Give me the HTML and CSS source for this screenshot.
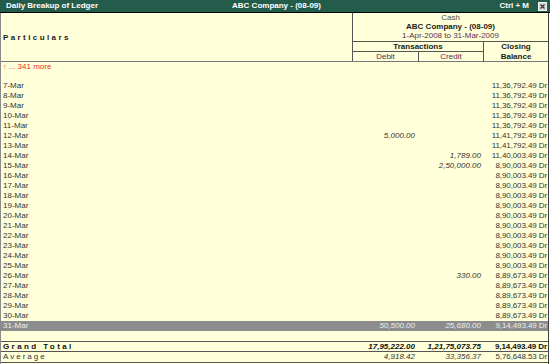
FILE: index.html
```html
<!DOCTYPE html>
<html lang="en">
<head>
    <meta charset="UTF-8">
    <title>Daily Breakup of Ledger</title>
    <link rel="stylesheet" href="styles.css">
</head>
<body>
    <div class="window">
        <!-- Barre de titre -->
        <div class="titlebar">
            <span class="t-left">Daily Breakup of Ledger</span>
            <span class="t-center">ABC Company - (08-09)</span>
            <span class="t-right">Ctrl + M
                <svg class="close" width="9" height="9" viewBox="0 0 9 9">
                    <rect x="0.5" y="0.5" width="8" height="8" fill="#d8d8d0" stroke="#f0f0f0"/>
                    <path d="M2.5 2.5 L6.5 6.5 M6.5 2.5 L2.5 6.5" stroke="#333" stroke-width="1.2"/>
                </svg>
            </span>
        </div>

        <div class="report">
            <!-- En-tête -->
            <div class="head">
                <div class="h-part">Particulars</div>
                <div class="h-info">
                    <div class="company">
                        <div class="c-ledger">Cash</div>
                        <div class="c-name">ABC Company - (08-09)</div>
                        <div class="c-period">1-Apr-2008 to 31-Mar-2009</div>
                    </div>
                    <div class="h-cols">
                        <div class="trans">
                            <div class="trans-title">Transactions</div>
                            <div class="dc">
                                <div class="h-debit">Debit</div>
                                <div class="h-credit">Credit</div>
                            </div>
                        </div>
                        <div class="h-closing">Closing<br>Balance</div>
                    </div>
                </div>
            </div>

            <div class="more"><span class="arrow">&uarr;</span> ... 341 more</div>
            <div class="gap"></div>

            <!-- Lignes du registre -->
            <div class="rows">
                <div class="row"><span class="part">7-Mar</span><span class="dr"></span><span class="cr"></span><span class="bal">11,36,792.49 Dr</span></div>
                <div class="row"><span class="part">8-Mar</span><span class="dr"></span><span class="cr"></span><span class="bal">11,36,792.49 Dr</span></div>
                <div class="row"><span class="part">9-Mar</span><span class="dr"></span><span class="cr"></span><span class="bal">11,36,792.49 Dr</span></div>
                <div class="row"><span class="part">10-Mar</span><span class="dr"></span><span class="cr"></span><span class="bal">11,36,792.49 Dr</span></div>
                <div class="row"><span class="part">11-Mar</span><span class="dr"></span><span class="cr"></span><span class="bal">11,36,792.49 Dr</span></div>
                <div class="row"><span class="part">12-Mar</span><span class="dr">5,000.00</span><span class="cr"></span><span class="bal">11,41,792.49 Dr</span></div>
                <div class="row"><span class="part">13-Mar</span><span class="dr"></span><span class="cr"></span><span class="bal">11,41,792.49 Dr</span></div>
                <div class="row"><span class="part">14-Mar</span><span class="dr"></span><span class="cr">1,789.00</span><span class="bal">11,40,003.49 Dr</span></div>
                <div class="row"><span class="part">15-Mar</span><span class="dr"></span><span class="cr">2,50,000.00</span><span class="bal">8,90,003.49 Dr</span></div>
                <div class="row"><span class="part">16-Mar</span><span class="dr"></span><span class="cr"></span><span class="bal">8,90,003.49 Dr</span></div>
                <div class="row"><span class="part">17-Mar</span><span class="dr"></span><span class="cr"></span><span class="bal">8,90,003.49 Dr</span></div>
                <div class="row"><span class="part">18-Mar</span><span class="dr"></span><span class="cr"></span><span class="bal">8,90,003.49 Dr</span></div>
                <div class="row"><span class="part">19-Mar</span><span class="dr"></span><span class="cr"></span><span class="bal">8,90,003.49 Dr</span></div>
                <div class="row"><span class="part">20-Mar</span><span class="dr"></span><span class="cr"></span><span class="bal">8,90,003.49 Dr</span></div>
                <div class="row"><span class="part">21-Mar</span><span class="dr"></span><span class="cr"></span><span class="bal">8,90,003.49 Dr</span></div>
                <div class="row"><span class="part">22-Mar</span><span class="dr"></span><span class="cr"></span><span class="bal">8,90,003.49 Dr</span></div>
                <div class="row"><span class="part">23-Mar</span><span class="dr"></span><span class="cr"></span><span class="bal">8,90,003.49 Dr</span></div>
                <div class="row"><span class="part">24-Mar</span><span class="dr"></span><span class="cr"></span><span class="bal">8,90,003.49 Dr</span></div>
                <div class="row"><span class="part">25-Mar</span><span class="dr"></span><span class="cr"></span><span class="bal">8,90,003.49 Dr</span></div>
                <div class="row"><span class="part">26-Mar</span><span class="dr"></span><span class="cr">330.00</span><span class="bal">8,89,673.49 Dr</span></div>
                <div class="row"><span class="part">27-Mar</span><span class="dr"></span><span class="cr"></span><span class="bal">8,89,673.49 Dr</span></div>
                <div class="row"><span class="part">28-Mar</span><span class="dr"></span><span class="cr"></span><span class="bal">8,89,673.49 Dr</span></div>
                <div class="row"><span class="part">29-Mar</span><span class="dr"></span><span class="cr"></span><span class="bal">8,89,673.49 Dr</span></div>
                <div class="row"><span class="part">30-Mar</span><span class="dr"></span><span class="cr"></span><span class="bal">8,89,673.49 Dr</span></div>
                <div class="row selected"><span class="part">31-Mar</span><span class="dr">50,500.00</span><span class="cr">25,680.00</span><span class="bal">9,14,493.49 Dr</span></div>
            </div>

            <div class="gap-bottom"></div>

            <!-- Totaux -->
            <div class="row total">
                <span class="part spaced">Grand Total</span>
                <span class="dr">17,95,222.00</span>
                <span class="cr">1,21,75,073.75</span>
                <span class="bal">9,14,493.49 Dr</span>
            </div>
            <div class="row average">
                <span class="part spaced">Average</span>
                <span class="dr">4,918.42</span>
                <span class="cr">33,356.37</span>
                <span class="bal">5,76,648.53 Dr</span>
            </div>
        </div>
    </div>
</body>
</html>
```

FILE: styles.css
```css
/* Styles du rapport */
body {
    margin: 0;
    padding: 0;
    font-family: "Liberation Sans", Arial, sans-serif;
    font-size: 8px;
    color: #333;
    background: #ffffd9;
}

.window {
    width: 550px;
    height: 364px;
    display: flex;
    flex-direction: column;
    overflow: hidden;
}

.titlebar {
    height: 12px;
    background: #245c4b;
    border-bottom: 1px solid #000;
    color: white;
    font-weight: bold;
    font-size: 8px;
    line-height: 12px;
    display: grid;
    grid-template-columns: 1fr auto 1fr;
    padding: 0 3px 0 6px;
}

.t-right {
    display: flex;
    justify-content: flex-end;
    align-items: center;
    gap: 9px;
}

.close {
    display: block;
}

.report {
    flex: 1;
    min-width: 0;
    border-left: 1px solid #8a8a8a;
    border-right: 1px solid #404040;
    margin-right: 1px;
    display: flex;
    flex-direction: column;
}

/* En-tête */
.head {
    display: flex;
    height: 48px;
    border-bottom: 1px solid #777;
}

.h-part {
    width: 349px;
    border-right: 1px solid #555;
    font-weight: bold;
    letter-spacing: 2.4px;
    padding-left: 2px;
    display: flex;
    align-items: center;
    color: #222;
}

.h-info {
    flex: 1;
    display: flex;
    flex-direction: column;
    text-align: center;
}

.company {
    height: 28px;
    border-bottom: 1px solid #555;
}

.c-ledger {
    line-height: 9px;
    color: #555;
}

.c-name {
    line-height: 9px;
    font-weight: bold;
    color: #1a1a1a;
}

.c-period {
    line-height: 10px;
    color: #5b2b50;
}

.h-cols {
    flex: 1;
    display: flex;
}

.trans {
    width: 130px;
    border-right: 1px solid #555;
    display: flex;
    flex-direction: column;
}

.trans-title {
    height: 9px;
    line-height: 9px;
    font-weight: bold;
    color: #1a1a1a;
    border-bottom: 1px solid #555;
}

.dc {
    flex: 1;
    display: flex;
    line-height: 10px;
    color: #5b2b50;
}

.h-debit {
    width: 65px;
    border-right: 1px solid #555;
}

.h-credit {
    flex: 1;
}

.h-closing {
    flex: 1;
    font-weight: bold;
    color: #1a1a1a;
    line-height: 10px;
}

/* Lignes */
.more {
    height: 10px;
    line-height: 10px;
    padding-left: 2px;
    color: #e8342f;
}

.arrow {
    font-size: 7px;
}

.gap {
    height: 9px;
}

.gap-bottom {
    height: 10px;
}

.row {
    display: grid;
    grid-template-columns: 351px 66px 65px minmax(0, 1fr);
    height: 10px;
    line-height: 10px;
    white-space: nowrap;
}

.row .part {
    padding-left: 2px;
}

.row .dr,
.row .cr,
.row .bal {
    text-align: right;
}

.row .dr {
    font-style: italic;
    padding-right: 3px;
}

.row .cr {
    font-style: italic;
    padding-right: 2px;
}

.row .bal {
    padding-right: 1px;
    letter-spacing: -0.1px;
}

.row.selected {
    background: #8c8c8c;
    color: #eeeeee;
}

.total {
    border-top: 1px solid #555;
    border-bottom: 1px solid #555;
    font-weight: bold;
    color: #111;
    height: 9px;
    line-height: 10px;
}

.average {
    border-bottom: 1px solid #555;
    height: 10px;
}

.average .bal {
    font-style: normal;
}

.spaced {
    letter-spacing: 2.4px;
}

.average .spaced {
    letter-spacing: 2px;
}
```
